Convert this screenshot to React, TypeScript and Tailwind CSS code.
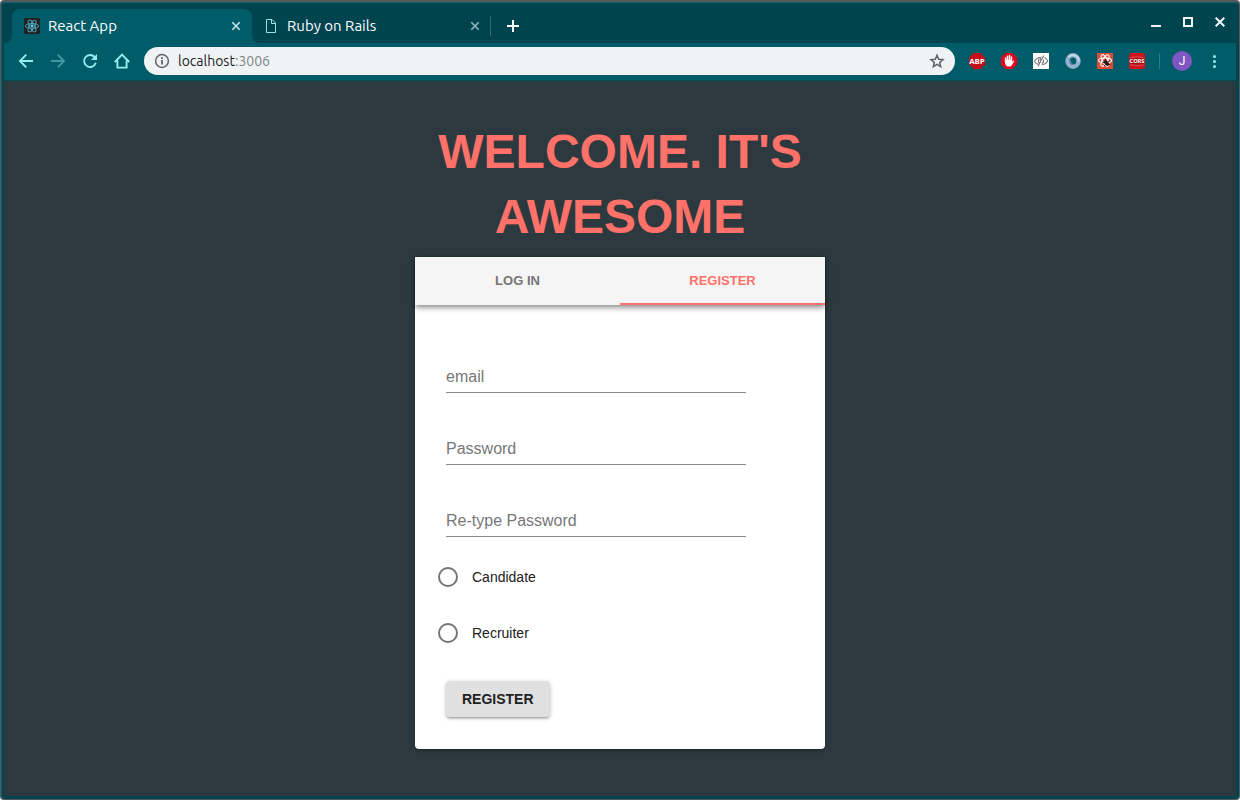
import { useState } from 'react';
import type { ReactNode } from 'react';

function ReactFavicon() {
  return (
    <svg viewBox="0 0 16 16" className="size-4 shrink-0" aria-hidden="true">
      <rect width="16" height="16" rx="1.5" fill="#222" />
      <g fill="none" stroke="#4fa9c0" strokeWidth="0.9">
        <ellipse cx="8" cy="8" rx="6.6" ry="2.5" />
        <ellipse cx="8" cy="8" rx="6.6" ry="2.5" transform="rotate(60 8 8)" />
        <ellipse cx="8" cy="8" rx="6.6" ry="2.5" transform="rotate(120 8 8)" />
      </g>
      <circle cx="8" cy="8" r="1.4" fill="#61dafb" />
    </svg>
  );
}

function PageIcon() {
  return (
    <svg viewBox="0 0 16 16" className="size-4 shrink-0" fill="none" stroke="#8fe8e6" strokeWidth="1" aria-hidden="true">
      <path d="M3.5 1.5h5.500l3.500 3.500v9.500h-9z" />
      <path d="M8.500 1.500v4h4" />
    </svg>
  );
}

function CloseIcon({ className }: { className: string }) {
  return (
    <svg viewBox="0 0 16 16" className={className} fill="none" stroke="currentColor" strokeWidth="1.6" aria-hidden="true">
      <path d="M4.3 4.3l7.4 7.4M11.7 4.3l-7.4 7.4" />
    </svg>
  );
}

function NavButton({ label, dim, children }: { label: string; dim?: boolean; children: ReactNode }) {
  return (
    <button type="button" aria-label={label} className={dim ? 'text-[#3f98a2]' : 'text-[#8df0ee]'}>
      <svg viewBox="0 0 16 16" className="size-4" fill="none" stroke="currentColor" strokeWidth="1.9" aria-hidden="true">
        {children}
      </svg>
    </button>
  );
}

function Extension({ label, children }: { label: string; children: ReactNode }) {
  return (
    <button type="button" aria-label={label}>
      <svg viewBox="0 0 16 16" className="size-4" aria-hidden="true">
        {children}
      </svg>
    </button>
  );
}

function TabStrip() {
  return (
    <div className="flex h-10 items-end bg-[#004450] font-['Ubuntu','Noto_Sans',sans-serif] text-[15px] text-white">
      <div className="h-[34px] w-2 bg-[#005c69]">
        <div className="h-full rounded-br-lg bg-[#004450]" />
      </div>
      <div className="flex h-[34px] w-60 items-center rounded-t-lg bg-[#005c69] px-3">
        <ReactFavicon />
        <span className="ml-2 flex-1">React App</span>
        <button type="button" aria-label="Close React App" className="-mr-1 text-[#c9e4e6]">
          <CloseIcon className="size-4" />
        </button>
      </div>
      <div className="h-[34px] flex-1 bg-linear-to-t from-[#005c69] from-50% to-[#004450] to-50%">
        <div className="flex h-full items-center rounded-bl-lg bg-[#004450]">
          <div className="flex w-[238px] items-center pr-[7px] pl-[11px]">
            <PageIcon />
            <span className="ml-2 flex-1">Ruby on Rails</span>
            <button type="button" aria-label="Close Ruby on Rails" className="text-[#94b5ba]">
              <CloseIcon className="size-4" />
            </button>
          </div>
          <div className="h-5 w-px bg-[#2f6a74]" />
          <button type="button" aria-label="New tab" className="ml-[14px]">
            <svg viewBox="0 0 16 16" className="size-4" stroke="#fff" strokeWidth="2" aria-hidden="true">
              <path d="M2 8h12M8 2v12" />
            </svg>
          </button>
          <div className="mb-2 ml-auto flex items-center gap-4 pr-2">
            <button type="button" aria-label="Minimize">
              <svg viewBox="0 0 16 16" className="size-4" aria-hidden="true">
                <path d="M3 11h10v2H3z" fill="#f0f3f4" />
              </svg>
            </button>
            <button type="button" aria-label="Maximize">
              <svg viewBox="0 0 16 16" className="size-4" aria-hidden="true">
                <rect x="4" y="4" width="8" height="8" fill="none" stroke="#f0f3f4" strokeWidth="2" />
              </svg>
            </button>
            <button type="button" aria-label="Close window">
              <svg viewBox="0 0 16 16" className="size-4" stroke="#f0f3f4" strokeWidth="2" aria-hidden="true">
                <path d="M3.7 3.7l8.6 8.6M12.3 3.7l-8.6 8.6" />
              </svg>
            </button>
          </div>
        </div>
      </div>
    </div>
  );
}

function Toolbar() {
  return (
    <div className="flex h-[38px] items-center border-b border-[#004a56] bg-[#005c69] px-[14px] pb-px">
      <div className="flex gap-4">
        <NavButton label="Back">
          <path d="M15 8H2.2M8.3 1.6L1.9 8l6.4 6.4" />
        </NavButton>
        <NavButton label="Forward" dim>
          <path d="M1 8h12.800M7.700 1.600L14.100 8l-6.400 6.400" />
        </NavButton>
        <NavButton label="Reload">
          <path d="M12.6 4A6 6 0 1 0 13.8 9.8" />
          <path d="M15 1v6H9z" fill="currentColor" stroke="none" />
        </NavButton>
        <NavButton label="Home">
          <path d="M0.8 9L8 1.6 15.2 9M3.4 7.4v7.2h9.2V7.4" />
        </NavButton>
      </div>
      <div className="ml-[14px] flex h-7 flex-1 items-center rounded-full bg-[#eff3f4] px-[10px]">
        <svg viewBox="0 0 16 16" className="size-4 shrink-0" fill="none" stroke="#5f6368" strokeWidth="1.5" aria-hidden="true">
          <circle cx="8" cy="8" r="6.4" />
          <path d="M8 7v4.5M8 4.3v1.6" strokeWidth="1.8" />
        </svg>
        <span className="flex-1 pl-2 font-['Ubuntu','Noto_Sans',sans-serif] text-sm text-[#202124]">
          localhost<span className="text-[#80868b]">:3006</span>
        </span>
        <button type="button" aria-label="Bookmark this page">
          <svg viewBox="0 0 16 16" className="size-4" fill="none" stroke="#5f6368" strokeWidth="1.5" aria-hidden="true">
            <path d="M8 2.2l1.7 4 4.3.4-3.3 2.8 1 4.2L8 11.4l-3.700 2.200 1-4.200L2 6.600l4.300-.4z" />
          </svg>
        </button>
      </div>
      <div className="ml-[14px] flex items-center gap-4">
        <Extension label="Adblock Plus">
          <path d="M4.7 0h6.6L16 4.7v6.6L11.3 16H4.7L0 11.3V4.7z" fill="#c70d18" />
          <text x="8" y="11" textAnchor="middle" fill="#fff" fontFamily="Open Sans, sans-serif" fontWeight="700" fontSize="7.800">ABP</text>
        </Extension>
        <Extension label="AdBlock">
          <path d="M4.7 0h6.6L16 4.7v6.6L11.3 16H4.7L0 11.3V4.7z" fill="#e8041c" />
          <path d="M4.600 8.200V4.900M6.500 7.500V3.200M8.500 7.500V2.600M10.400 8V3.900" stroke="#fff" strokeWidth="1.500" strokeLinecap="round" />
          <path d="M3.900 7h7.300v2l1.100-1.300q.8-.5 1.100.3L10.900 12q-.9 1.500-2.200 1.500H7.200q-1.700 0-2.500-1.600Q3.900 10.500 3.900 9z" fill="#fff" />
        </Extension>
        <Extension label="View inspector">
          <path d="M0 0h16v16H0z" fill="#fff" />
          <g fill="none" stroke="#777" strokeWidth="1.1">
            <path d="M1.300 8.200Q4.300 4 8.500 4.200M14.900 8Q12 12 9 11.500M1.300 8.200Q3 10.800 5.300 11.400M14.900 8Q13.500 5.300 11.500 4.500" />
            <path d="M10.800 2.500L5 13.500M6.300 5.500Q4.600 8 6.300 10.500M7.300 5.200l.7 3" />
            <path d="M10.500 6.500Q11.300 8.500 9 10.500" />
          </g>
        </Extension>
        <Extension label="Ring">
          <ellipse cx="8" cy="8" rx="5.500" ry="5.700" fill="none" stroke="#91b0ce" strokeWidth="4.400" />
          <path d="M3.300 4.200Q6.500.8 11 2.800Q14 4.700 13.900 8.500" fill="none" stroke="#c4d5e5" strokeWidth="2" />
          <path d="M5.200 5.300Q4.500 9 7.500 11.500" fill="none" stroke="#537fab" strokeWidth="1.500" />
        </Extension>
        <Extension label="React developer tools">
          <path d="M0 0h16v16H0z" fill="#dd4b39" />
          <g fill="none" stroke="#fff" strokeWidth="1.100">
            <ellipse cx="8" cy="7.500" rx="6.500" ry="2.500" />
            <ellipse cx="8" cy="7.500" rx="6.500" ry="2.500" transform="rotate(60 8 7.500)" />
            <ellipse cx="8" cy="7.500" rx="6.500" ry="2.500" transform="rotate(120 8 7.500)" />
          </g>
          <ellipse cx="9.500" cy="10" rx="1.900" ry="3.400" transform="rotate(-40 9.500 10)" fill="#2d1714" />
          <path d="M5.500 9.500h3M7 13l2-2M8.500 6v3M12.800 7.500l-2 2M13.500 11.500h-2" stroke="#2d1714" />
        </Extension>
        <Extension label="CORS">
          <rect width="16" height="16" rx="2.5" fill="#d2131b" />
          <path d="M1 5.500Q8 3.500 15 5.500V11Q8 13 1 11z" fill="#a80c13" />
          <path d="M1.500 4.600Q8 3 14.500 4.600M1.500 11.800Q8 13 14.500 11.800" fill="none" stroke="#ef7478" strokeWidth="0.600" />
          <text x="8" y="10.400" textAnchor="middle" fill="#fff" fontFamily="Open Sans, sans-serif" fontWeight="700" fontSize="5.600">CORS</text>
        </Extension>
      </div>
      <div className="ml-[14px] h-4 w-px bg-[#2c7f89]" />
      <button
        type="button"
        aria-label="Profile"
        className="ml-3 flex size-5 items-center justify-center rounded-full bg-[#7e57c2] font-['Roboto',sans-serif] text-xs text-white"
      >
        J
      </button>
      <button type="button" aria-label="Browser menu" className="ml-[14px]">
        <svg viewBox="0 0 16 16" className="size-4" fill="#8df0ee" aria-hidden="true">
          <circle cx="8.500" cy="3.500" r="1.500" />
          <circle cx="8.500" cy="8.500" r="1.500" />
          <circle cx="8.500" cy="13.500" r="1.500" />
        </svg>
      </button>
    </div>
  );
}

const fields = [
  { id: 'email', label: 'email', type: 'email' },
  { id: 'password', label: 'Password', type: 'password' },
  { id: 'retype', label: 'Re-type Password', type: 'password' },
];

const roles = ['Candidate', 'Recruiter'];

function RegisterCard() {
  const [tab, setTab] = useState('REGISTER');
  return (
    <section className="rounded-b bg-white shadow-[0_1px_5px_rgba(0,0,0,0.2),0_2px_2px_rgba(0,0,0,0.14)]">
      <div
        role="tablist"
        className="flex h-12 bg-[#f5f5f5] shadow-[0_2px_4px_-1px_rgba(0,0,0,0.3),0_4px_5px_rgba(0,0,0,0.16),0_1px_10px_rgba(0,0,0,0.14)]"
      >
        {['LOG IN', 'REGISTER'].map((name) => (
          <button
            key={name}
            type="button"
            role="tab"
            aria-selected={tab === name}
            onClick={() => setTab(name)}
            className={
              tab === name
                ? 'flex-1 border-b-2 border-[#ff7169] pt-0.5 text-[13px] font-bold text-[#ff7169]'
                : 'flex-1 border-b-2 border-transparent pt-0.5 text-[13px] font-bold text-[#757575]'
            }
          >
            {name}
          </button>
        ))}
      </div>
      <form className="flex flex-col items-start px-[31px] pt-14 pb-8" onSubmit={(e) => e.preventDefault()}>
        <div className="flex flex-col gap-10">
          {fields.map((f) => (
            <input
              key={f.id}
              id={f.id}
              type={f.type}
              aria-label={f.label}
              placeholder={f.label}
              className="h-8 w-[300px] max-w-full border-b border-[#8c8c8c] text-base text-[#212121] outline-none placeholder:text-[#777777]"
            />
          ))}
        </div>
        <div className="mt-[30px] -ml-2 flex flex-col gap-9">
          {roles.map((role) => (
            <label key={role} className="flex h-5 items-center gap-[14px] text-sm text-[#212121]">
              <input
                type="radio"
                name="role"
                value={role}
                className="size-5 appearance-none rounded-full border-2 border-[#757575] checked:border-[6px] checked:border-[#ff7169]"
              />
              {role}
            </label>
          ))}
        </div>
        <button
          type="submit"
          className="mt-[38px] h-9 rounded bg-[#e0e0e0] px-4 text-sm font-bold text-[#212121] shadow-[0_1px_5px_rgba(0,0,0,0.2),0_2px_2px_rgba(0,0,0,0.14),0_3px_1px_-2px_rgba(0,0,0,0.12)]"
        >
          REGISTER
        </button>
      </form>
    </section>
  );
}

export default function App() {
  return (
    <div className="flex min-h-screen flex-col rounded bg-[#56595c] px-px pt-0.5 pb-px font-['Liberation_Sans',Arial,sans-serif]">
      <div className="flex flex-1 flex-col rounded-sm border-t border-l border-[#0a5f6b] bg-[#004450] pr-[3px] pb-[3px] pl-0.5">
        <TabStrip />
        <Toolbar />
        <main className="flex flex-1 flex-col items-center bg-[#2c3a3f] px-4 pt-[38px] pb-8">
          <div className="w-full max-w-[410px]">
            <h1 className="mb-2 text-center text-5xl leading-[65px] font-bold text-[#ff7169]">WELCOME. IT'S AWESOME</h1>
            <RegisterCard />
          </div>
        </main>
      </div>
    </div>
  );
}
